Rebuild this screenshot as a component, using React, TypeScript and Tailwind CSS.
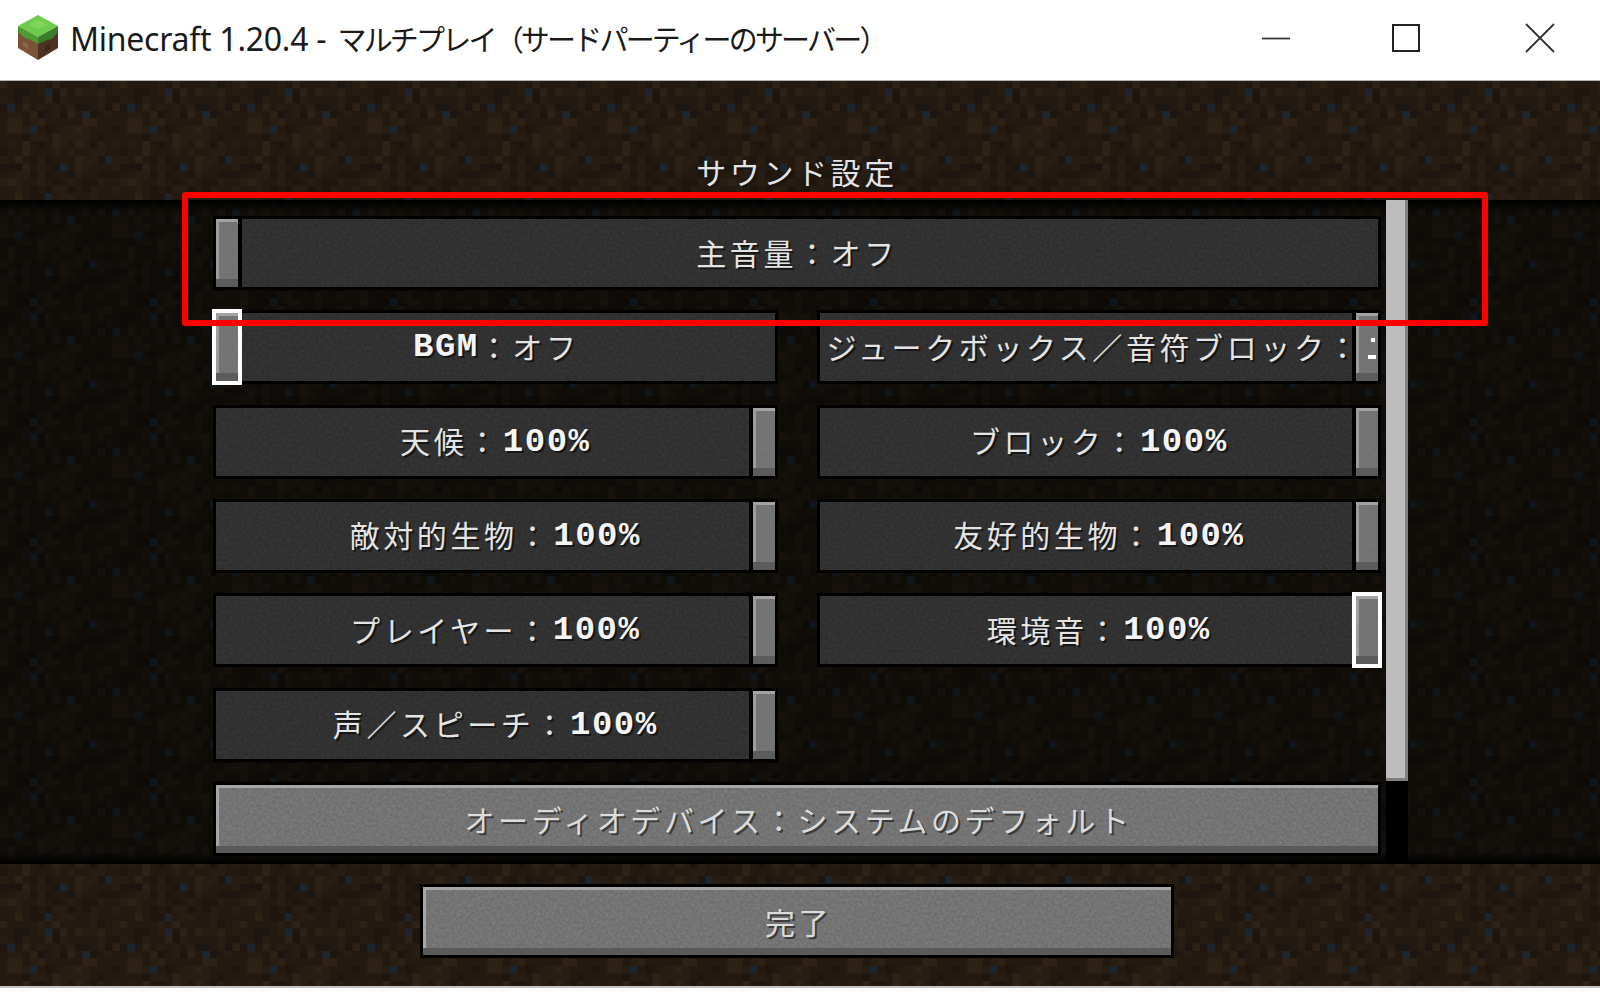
import React from "react";

const jp = "font-['Noto_Sans_CJK_JP',sans-serif]";

function cells() {
  let s = 1234567;
  const rnd = () => {
    s = (s * 1103515245 + 12345) & 0x7fffffff;
    return (s >> 8) / 8388607 % 1;
  };
  const out: { x: number; y: number; k: number }[] = [];
  const blue = ["6,1", "11,4", "1,3", "4,6", "14,10", "8,11", "6,15"];
  for (let y = 0; y < 16; y++) {
    for (let x = 0; x < 16; x++) {
      const r = rnd();
      let k = r < 0.2 ? 0 : r < 0.62 ? 1 : r < 0.88 ? 2 : 3;
      if (blue.includes(`${x},${y}`)) k = 4;
      out.push({ x, y, k });
    }
  }
  return out;
}
const TILE = cells();

function Dirt({ id, palette, tx, ty }: { id: string; palette: string[]; tx: number; ty: number }) {
  return (
    <svg className="absolute inset-0 w-full h-full blur-[0.6px]" aria-hidden="true">
      <defs>
        <pattern id={id} width="120" height="120" patternUnits="userSpaceOnUse" patternTransform={`translate(${tx} ${ty})`}>
          {TILE.map((c) => (
            <rect key={`${c.x}-${c.y}`} x={c.x * 7.5} y={c.y * 7.5} width="7.6" height="7.6" fill={palette[c.k]} />
          ))}
        </pattern>
      </defs>
      <rect width="100%" height="100%" fill={`url(#${id})`} />
    </svg>
  );
}

function Noise({ strong }: { strong?: boolean }) {
  return (
    <svg className="absolute inset-0 w-full h-full pointer-events-none blur-[0.5px]" aria-hidden="true">
      <rect width="100%" height="100%" filter="url(#mc-noise)" opacity={strong ? 0.13 : 0.05} />
    </svg>
  );
}

function Label({ parts, light }: { parts: (string | { n: string })[]; light?: boolean }) {
  return (
    <span
      className={`${jp} flex items-center whitespace-nowrap text-[30px] leading-none tracking-[3.6px] ${
        light ? "text-[#dcdcdc] [text-shadow:2px_2px_0_#3c3c3c]" : "text-[#e4e4e4] [text-shadow:2px_2px_0_#161616]"
      }`}
    >
      {parts.map((p, i) =>
        typeof p === "string" ? (
          <span key={i} className="-mt-[3px]">{p}</span>
        ) : (
          <span key={i} className="ml-[2px] font-['Liberation_Mono',monospace] font-bold text-[34px] tracking-[1.5px] text-[#f4f4f4]">
            {p.n}
          </span>
        )
      )}
    </span>
  );
}

function Knob({ side, focus, marks }: { side: "l" | "r"; focus?: boolean; marks?: boolean }) {
  return (
    <div
      className={`absolute top-0 bottom-0 w-[22px] bg-[#727272] border-t-[3px] border-l-[3px] border-t-[#a3a3a3] border-l-[#9c9c9c] ${
        side === "l" ? "left-0" : "right-0"
      } ${focus ? "ring-[4px] ring-white" : side === "r" ? "shadow-[-4px_0_0_0_#000]" : "shadow-[4px_0_0_0_#000]"}`}
    >
      <Noise />
      <div className="absolute -left-[3px] right-0 bottom-0 h-[8px] bg-[#5c5c5c]" />
      {marks && (
        <>
          <span className="absolute left-[12px] top-[22px] w-[4px] h-[4px] bg-white" />
          <span className="absolute left-[9px] top-[39px] w-[8px] h-[4px] bg-white" />
        </>
      )}
    </div>
  );
}

function Slider({
  parts,
  side = "r",
  focus,
  className = "",
  left,
}: {
  parts: (string | { n: string })[];
  side?: "l" | "r";
  focus?: boolean;
  className?: string;
  left?: boolean;
}) {
  return (
    <div className={`relative h-[68px] bg-[#2e2e2e] ring-[3px] ring-black flex items-center ${left ? "justify-start pl-[7px]" : "justify-center"} ${className}`}>
      <Noise />
      <span className="relative z-10">
        <Label parts={parts} />
      </span>
      <Knob side={side} focus={focus} marks={left} />
    </div>
  );
}

function LightButton({ text, className = "" }: { text: string; className?: string }) {
  return (
    <div className={`relative h-[68px] bg-[#6e6e6e] ring-[3px] ring-black border-t-[3px] border-l-[3px] border-t-[#a6a6a6] border-l-[#a6a6a6] flex items-center justify-center ${className}`}>
      <Noise strong />
      <div className="absolute -left-[3px] right-0 bottom-0 h-[7px] bg-[#5a5a5a]" />
      <span className="relative z-10">
        <Label parts={[text]} light />
      </span>
    </div>
  );
}

export default function App() {
  return (
    <div className="relative w-[1600px] h-[993px] overflow-hidden bg-white flex flex-col">
      <svg className="absolute w-0 h-0" aria-hidden="true">
        <filter id="mc-noise" x="0" y="0" width="100%" height="100%">
          <feTurbulence type="fractalNoise" baseFrequency="0.35" numOctaves="2" seed="7" />
          <feColorMatrix type="matrix" values="0 0 0 0 1  0 0 0 0 1  0 0 0 0 1  1.6 0 0 0 -0.45" />
        </filter>
      </svg>

      {/* Title bar */}
      <header className="h-[81px] shrink-0 bg-white border-b border-[#b4b4b4] flex items-center">
        <svg className="ml-[17px] w-[42px] h-[48px] blur-[0.6px] -mt-[4px]" viewBox="0 0 42 48" aria-hidden="true">
          <polygon points="1,12 21,23 21,46 1,34" fill="#7a5238" />
          <polygon points="41,12 21,23 21,46 41,34" fill="#4f3322" />
          <polygon points="1,12 21,23 21,30 14,26 8,24 1,18" fill="#4f9a33" />
          <polygon points="41,12 21,23 21,30 30,26 35,25 41,18" fill="#3b7d2a" />
          <polygon points="21,1 41,12 21,23 1,12" fill="#6fcb4c" />
          <polygon points="21,5 31,11 21,15 12,11" fill="#7fd65a" />
          <polygon points="6,27 11,30 11,35 6,32" fill="#8f6545" />
          <polygon points="28,32 34,28 34,34 28,38" fill="#3f2819" />
        </svg>
        <h1 className="ml-[11px] -mt-[3px] font-['Noto_Sans','Noto_Sans_CJK_JP',sans-serif] text-[32px] leading-none text-[#1a1a1a] whitespace-nowrap font-normal">
          <span className="tracking-[-0.25px]">Minecraft 1.20.4 - </span>
          <span className="ml-[3px] font-['Noto_Sans_CJK_JP',sans-serif] text-[29px] tracking-[-2.8px]">マルチプレイ（サードパーティーのサーバー）</span>
        </h1>
        <div className="ml-auto flex items-center">
          <svg className="w-[30px] h-[30px] mr-[100px] -mt-[4px]" viewBox="0 0 30 30" aria-hidden="true">
            <line x1="1" y1="15.5" x2="29" y2="15.5" stroke="#3a3a3a" strokeWidth="1.8" />
          </svg>
          <svg className="w-[30px] h-[30px] mr-[104px] -mt-[4px]" viewBox="0 0 30 30" aria-hidden="true">
            <rect x="2" y="2" width="26" height="26" fill="none" stroke="#222" strokeWidth="2" />
          </svg>
          <svg className="w-[30px] h-[30px] mr-[45px] -mt-[4px]" viewBox="0 0 30 30" aria-hidden="true">
            <path d="M1 1 L29 29 M29 1 L1 29" stroke="#333" strokeWidth="1.8" />
          </svg>
        </div>
      </header>

      {/* Game area */}
      <main className="relative h-[905px] shrink-0 flex flex-col bg-[#241a12]">
        <Dirt id="dirt-a" tx={0} ty={0} palette={["#1d150f", "#231910", "#281d13", "#2e2116", "#1b2630"]} />

        <div className="relative h-[119px] w-[1594px] flex justify-center pt-[64px]">
          <Label parts={["サウンド設定"]} />
        </div>

        <section className="relative h-[664px] flex pl-[216px] bg-[#100c08] overflow-hidden">
          <Dirt id="dirt-b" tx={-15} ty={-14} palette={["#0d0a07", "#100c08", "#130f0a", "#16110c", "#0f171c"]} />
          <div className="absolute left-0 right-0 top-0 h-[12px] bg-gradient-to-b from-black to-transparent" />
          <div className="absolute left-0 right-0 bottom-0 h-[12px] bg-gradient-to-t from-black to-transparent" />

          <div className="relative w-[1162px] pt-[19px] flex flex-col gap-[26.33px]">
            <Slider side="l" parts={["主音量：オフ"]} />
            <div className="grid grid-cols-2 gap-x-[45px]">
              <Slider side="l" focus parts={[{ n: "BGM" }, "：オフ"]} />
              <Slider left parts={["ジュークボックス／音符ブロック："]} />
            </div>
            <div className="grid grid-cols-2 gap-x-[45px]">
              <Slider parts={["天候：", { n: "100%" }]} />
              <Slider parts={["ブロック：", { n: "100%" }]} />
            </div>
            <div className="grid grid-cols-2 gap-x-[45px]">
              <Slider parts={["敵対的生物：", { n: "100%" }]} />
              <Slider parts={["友好的生物：", { n: "100%" }]} />
            </div>
            <div className="grid grid-cols-2 gap-x-[45px]">
              <Slider parts={["プレイヤー：", { n: "100%" }]} />
              <Slider focus parts={["環境音：", { n: "100%" }]} />
            </div>
            <div className="grid grid-cols-2 gap-x-[45px]">
              <Slider parts={["声／スピーチ：", { n: "100%" }]} />
            </div>
            <LightButton text="オーディオデバイス：システムのデフォルト" />
          </div>

          <div className="relative ml-[8px] w-[22px] bg-black">
            <div className="h-[581px] bg-[#bdbdbd] border-r-[3px] border-b-[3px] border-[#808080]" />
          </div>
        </section>

        <footer className="relative h-[122px] pt-[23px] pl-[423px]">
          <LightButton text="完了" className="w-[748px]" />
        </footer>

        <div className="absolute left-[182px] top-[111px] w-[1306px] h-[134px] border-[6px] border-[#fe0000] rounded-[3px] z-20" />
      </main>

      <div className="h-[7px] border-t-2 border-[#c4c4c4] bg-white" />
    </div>
  );
}
